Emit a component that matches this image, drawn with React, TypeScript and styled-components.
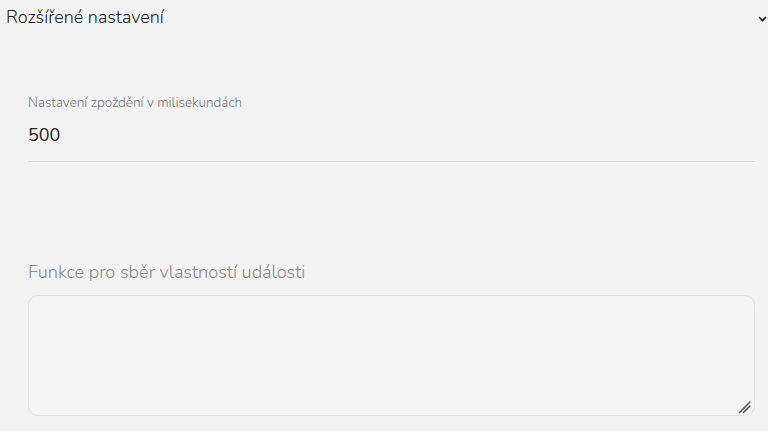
import React, { useState } from 'react';
import styled, { createGlobalStyle } from 'styled-components';

const GlobalStyle = createGlobalStyle`
  html, body {
    margin: 0;
    padding: 0;
    background: #f2f2f2;
  }
  body {
    font-family: 'Nunito', 'Open Sans', 'Lato', sans-serif;
    font-weight: 300;
    color: #222;
  }
`;

const Page = styled.div`
  width: 768px;
  height: 431px;
  overflow: hidden;
  background: #f2f2f2;
`;

const Header = styled.div`
  display: flex;
  align-items: center;
  justify-content: space-between;
  height: 36px;
  padding: 0 0 0 6px;
`;

const Title = styled.span`
  font-size: 18px;
  color: #222;
  margin-top: -2px;
`;

const Chevron = styled.svg`
  width: 9px;
  height: 6px;
  margin-right: 1px;
  margin-top: 1px;
`;

const Body = styled.div`
  display: flex;
  flex-direction: column;
  padding: 0 13px 0 28px;
`;

const Field = styled.div`
  display: flex;
  flex-direction: column;
  margin-top: 58px;
  border-bottom: 1px solid #dcdcdc;
`;

const SmallLabel = styled.label`
  font-size: 13.5px;
  color: #777;
  line-height: 17px;
`;

const Input = styled.input`
  border: none;
  outline: none;
  background: transparent;
  font-family: inherit;
  font-weight: 400;
  font-size: 18px;
  color: #222;
  padding: 0;
  height: 26px;
  margin: 11px 0 13px;
`;

const BigLabel = styled.label`
  font-size: 18.2px;
  color: #8a8a8a;
  margin-top: 98px;
  line-height: 24px;
`;

const AreaWrap = styled.div`
  position: relative;
  display: flex;
  margin-top: 11px;
`;

const TextArea = styled.textarea`
  flex: 1;
  height: 121px;
  box-sizing: border-box;
  border: 1px solid #e0e0e0;
  border-radius: 10px;
  background: #f4f4f4;
  font-family: inherit;
  font-size: 14px;
  padding: 8px 10px;
  outline: none;
  resize: none;
`;

const Grip = styled.svg`
  position: absolute;
  right: 3px;
  bottom: 2px;
  width: 14px;
  height: 14px;
  pointer-events: none;
`;

const App: React.FC = () => {
    const [delay, setDelay] = useState('500');
    const [fn, setFn] = useState('');

    return (
        <Page>
            <GlobalStyle />
            <Header>
                <Title>Rozšířené nastavení</Title>
                <Chevron viewBox="0 0 9 6">
                    <path d="M1 1 L4.5 4.5 L8 1" fill="none" stroke="#111" strokeWidth="1.6" />
                </Chevron>
            </Header>
            <Body>
                <Field>
                    <SmallLabel>Nastavení zpoždění v milisekundách</SmallLabel>
                    <Input value={delay} onChange={(e) => setDelay(e.target.value)} />
                </Field>
                <BigLabel>Funkce pro sběr vlastností události</BigLabel>
                <AreaWrap>
                    <TextArea value={fn} onChange={(e) => setFn(e.target.value)} />
                    <Grip viewBox="0 0 14 14">
                        <path d="M1.5 12.5 L12 2 M5.5 12.5 L12 6" stroke="#555" strokeWidth="1.5" strokeLinecap="round" fill="none" />
                    </Grip>
                </AreaWrap>
            </Body>
        </Page>
    );
};

export default App;
